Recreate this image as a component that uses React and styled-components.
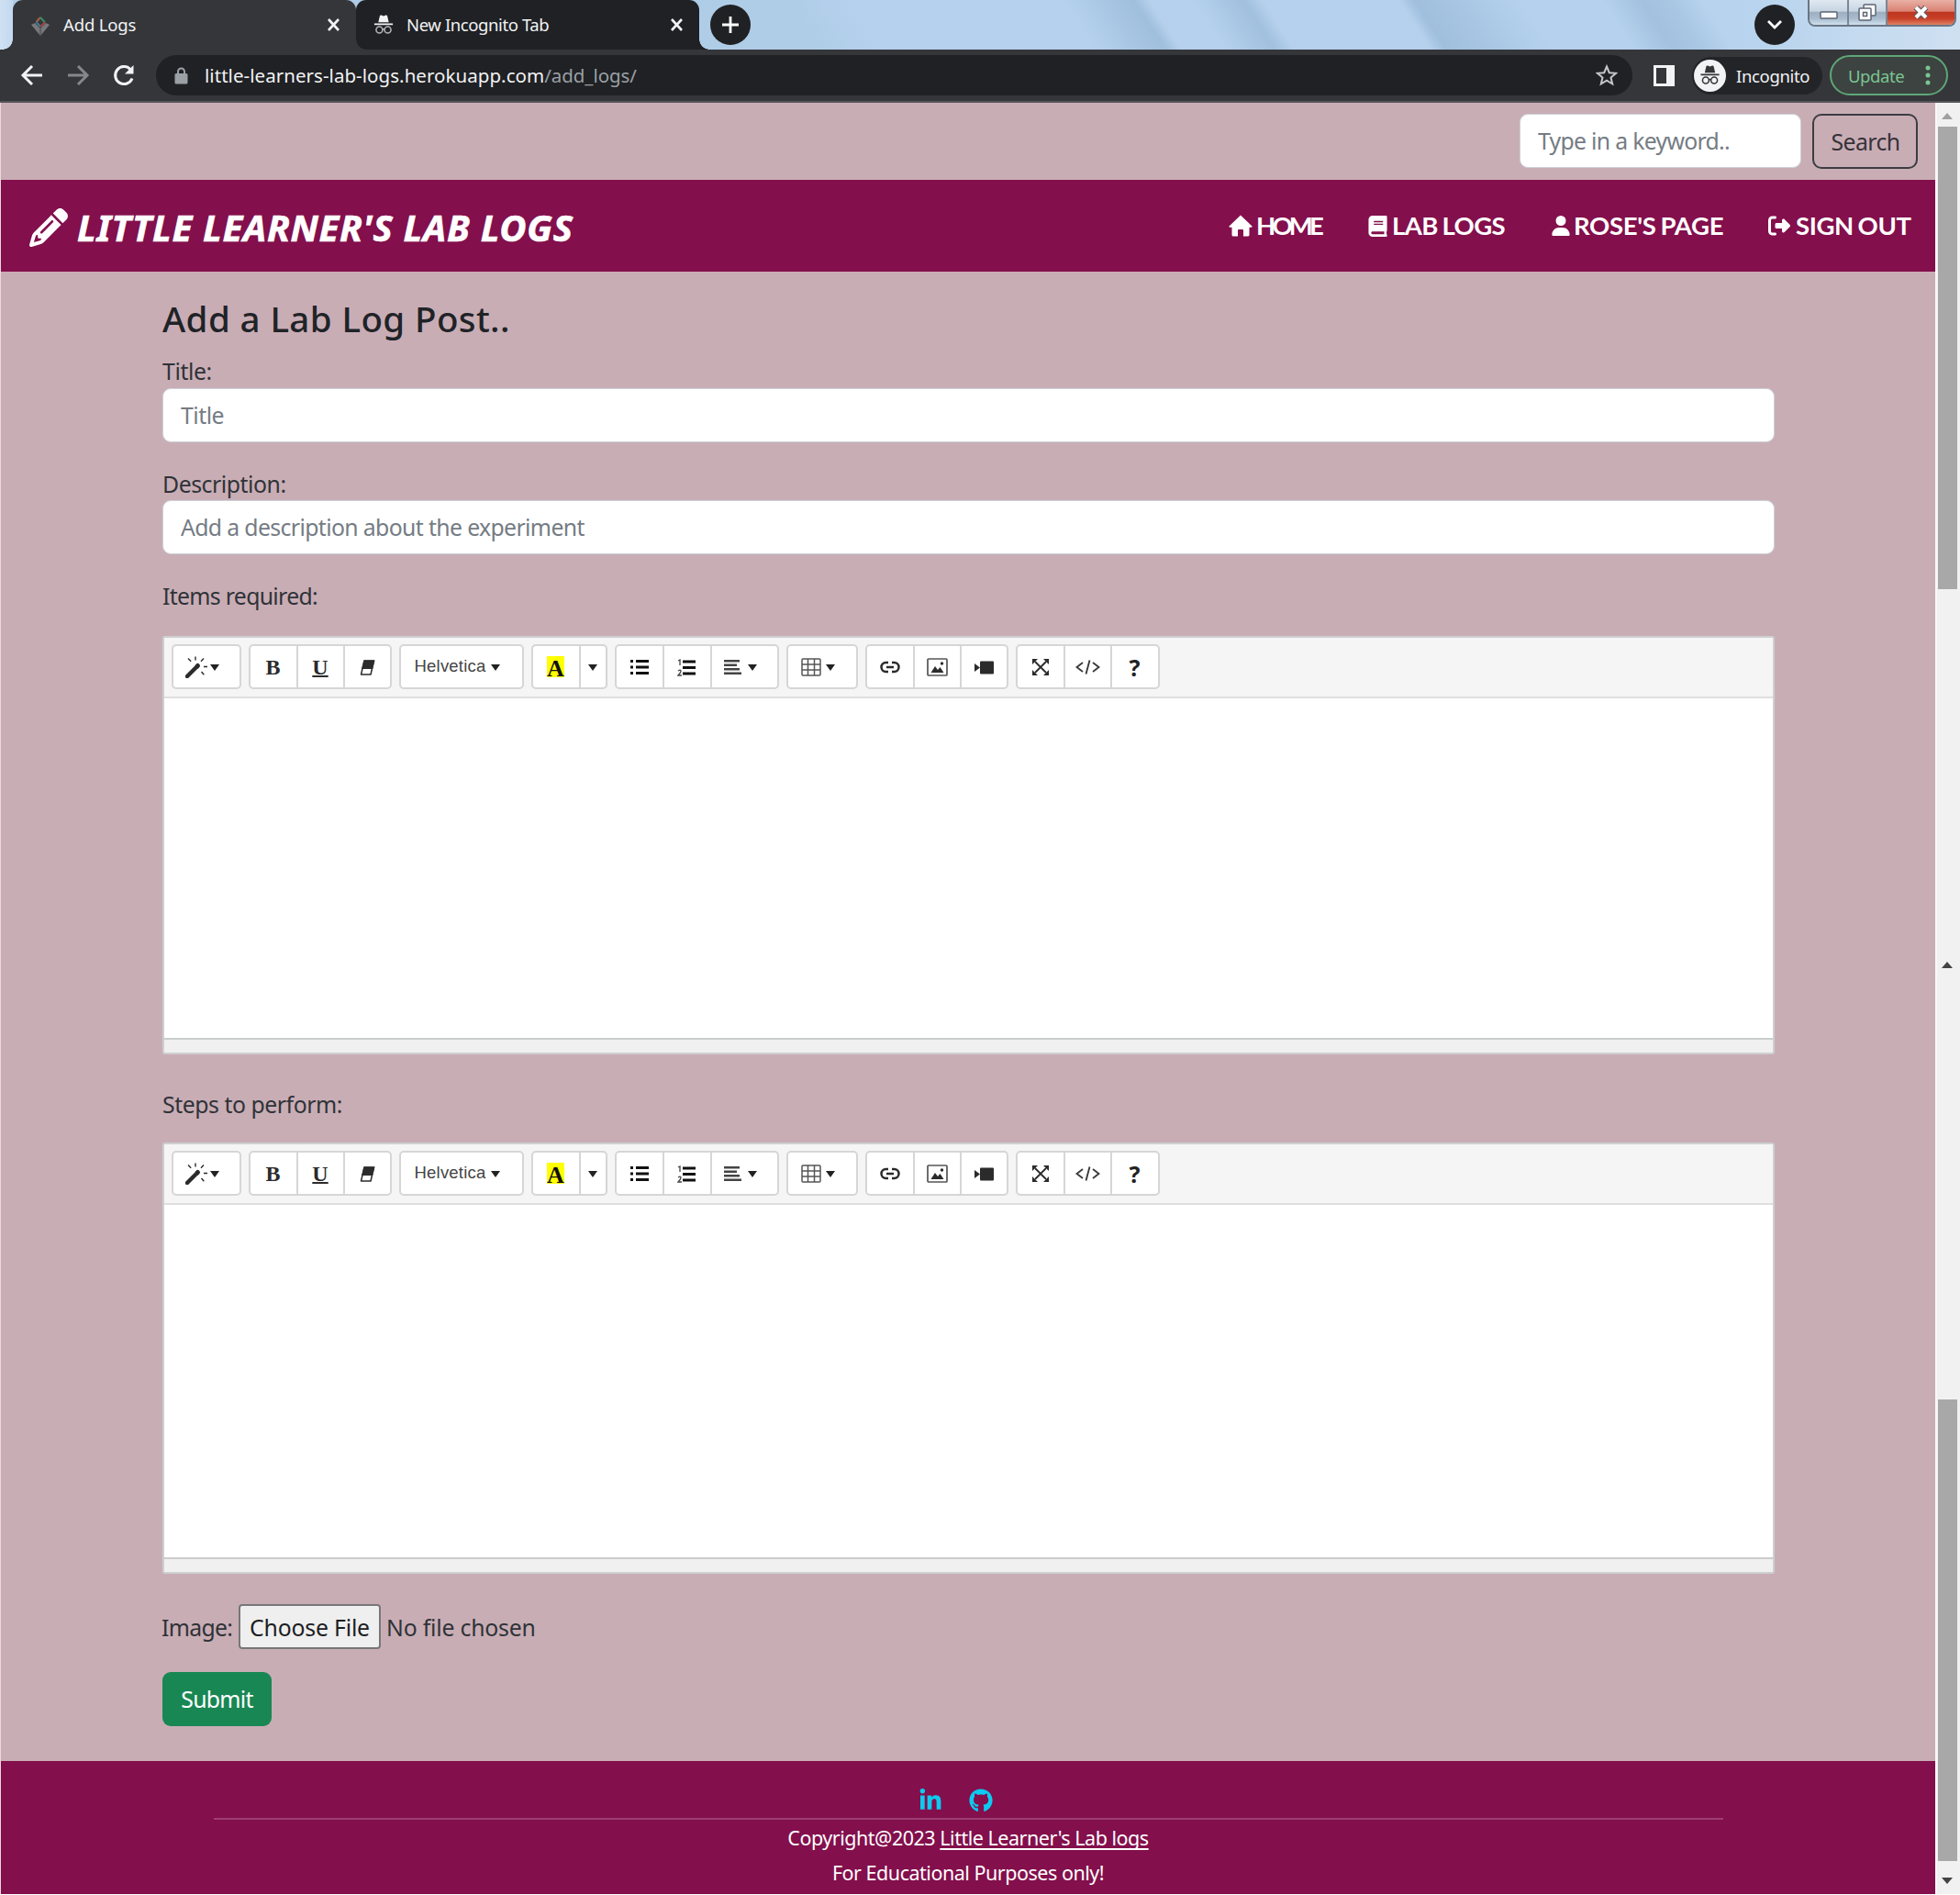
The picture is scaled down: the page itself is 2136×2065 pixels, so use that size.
import React from "react";
import styled, { createGlobalStyle } from "styled-components";
import { FaBook, FaLinkedinIn, FaGithub } from "react-icons/fa";
import { FaUser, FaRightFromBracket, FaPencil } from "react-icons/fa6";

const BURGUNDY = "#830f4c";
const ROSE = "#c9adb5";

const GlobalStyle = createGlobalStyle`
  * { box-sizing: border-box; }
  body { margin: 0; background: #fff; color: #2f3338; font-family: "Noto Sans", "Open Sans", sans-serif; overflow: hidden; }
  input, button { font-family: inherit; }
`;

const Window = styled.div`
  width: 2136px;
  height: 2065px;
  display: flex;
  flex-direction: column;
  overflow: hidden;
`;

/* ---------- browser chrome ---------- */
const TabStrip = styled.div`
  height: 54px;
  flex: none;
  display: flex;
  padding-left: 14px;
  background:
    linear-gradient(90deg, #cfe1f3 0, #c3d9ef 14px, transparent 14px),
    linear-gradient(57deg, rgba(150,185,205,.16) 0 41%, transparent 44% 55%, rgba(110,150,185,.3) 58.5%, transparent 59.300% 61.500%, rgba(110,150,185,.28) 64%, transparent 65% 71.800%, rgba(110,150,185,.3) 72.600%, transparent 78% 82%, rgba(110,150,185,.26) 84%, rgba(110,150,185,.18) 85.500%, transparent 87%),
    linear-gradient(90deg, #b4d0ec 0, #b5d1ed 84%, #b9d4ee 90%, #cfe0f1 100%);
`;
const Tab = styled.div`
  position: relative;
  z-index: ${(p) => (p.$active ? 1 : 0)};
  width: ${(p) => p.$width}px;
  height: 54px;
  padding: 0 16px 0 19px;
  display: flex;
  align-items: center;
  background: ${(p) => (p.$active ? "#35363a" : "#202124")};
  border-radius: 11px 11px 0 0;
  color: #f1f3f4;
  &::before, &::after {
    content: "";
    position: absolute;
    bottom: 0;
    width: 11px;
    height: 11px;
  }
  &::before { left: -11px; background: radial-gradient(circle at 0 0, transparent 10.5px, ${(p) => (p.$active ? "#35363a" : "#202124")} 11px); }
  &::after { right: -11px; background: radial-gradient(circle at 100% 0, transparent 10.5px, ${(p) => (p.$active ? "#35363a" : "#202124")} 11px); }
`;
const TabTitle = styled.span`
  flex: 1;
  margin-left: 14px;
  font-size: 18.5px;
  line-height: 54px;
  letter-spacing: ${(p) => p.$spacing}px;
  white-space: nowrap;
`;
const RoundButton = styled.div`
  width: 44px;
  height: 44px;
  margin: 5px 0 0 ${(p) => p.$left}px;
  border-radius: 50%;
  background: #202124;
  display: grid;
  place-items: center;
`;
const WindowButtons = styled.div`
  display: flex;
  height: 29px;
  width: 162px;
  margin: 0 4px 0 14px;
  border: 2px solid #6a7684;
  border-top: 0;
  border-radius: 0 0 8px 8px;
  overflow: hidden;
`;
const WindowButton = styled.div`
  width: ${(p) => p.$width}px;
  padding-top: ${(p) => p.$drop || 0}px;
  border-right: ${(p) => (p.$close ? 0 : 2)}px solid #7a8796;
  background: ${(p) => p.$close
    ? "linear-gradient(#e9b0a5 0, #d98273 45%, #bf3621 50%, #c83f26 75%, #e08265 100%)"
    : "linear-gradient(#dfe8f1 0, #c7d5e2 45%, #9dafc1 50%, #a9bccd 75%, #cfe0ee 100%)"};
  display: grid;
  place-items: center;
`;
const AddressBar = styled.div`
  height: 58px;
  flex: none;
  display: flex;
  align-items: center;
  background: #35363a;
  border-bottom: 2px solid #55565a;
  padding: 0 12px 0 22px;
`;
const NavIcons = styled.div`
  display: flex;
  gap: 24px;
  width: 148px;
`;
const Omnibox = styled.div`
  width: 1609px;
  height: 44px;
  border-radius: 22px;
  background: #202124;
  display: flex;
  align-items: center;
  padding: 0 16px 0 20px;
`;
const Url = styled.div`
  flex: 1;
  margin-left: 18px;
  font-size: 20.5px;
  line-height: 44px;
  letter-spacing: 0.05px;
  color: #f1f3f4;
  span { color: #9aa0a6; letter-spacing: -0.05px; }
`;
const PanelIcon = styled.div`
  width: 23px;
  height: 23px;
  margin: 0 19px 0 23px;
  border: 3px solid #f1f3f4;
  border-right-width: 9px;
`;
const Profile = styled.div`
  width: 142px;
  height: 41px;
  border-radius: 21px;
  background: #232428;
  padding-left: 2px;
  display: flex;
  align-items: center;
  gap: 11px;
  color: #f1f3f4;
  font-size: 18.5px;
  letter-spacing: -0.35px;
`;
const Update = styled.div`
  width: 129px;
  height: 44px;
  margin-left: 8px;
  border: 2px solid #5fa777;
  border-radius: 22px;
  background: #3c4340;
  color: #7bc592;
  font-size: 18.5px;
  display: flex;
  align-items: center;
  justify-content: space-between;
  padding: 0 17px 0 18px;
  letter-spacing: -0.4px;
`;

/* ---------- page ---------- */
const Viewport = styled.div`
  display: flex;
  height: 1952px;
`;
const Page = styled.div`
  width: 2109px;
  border-left: 1px solid #ead9de;
  background: ${ROSE};
  display: flex;
  flex-direction: column;
`;
const SearchRow = styled.div`
  height: 84px;
  padding: 12px 19px 0 0;
  display: flex;
  justify-content: flex-end;
  gap: 12px;
`;
const Field = styled.input`
  display: block;
  width: ${(p) => p.$width}px;
  height: 59px;
  border: 1.5px solid #ccd1d8;
  border-radius: 9px;
  background: #fff;
  padding: 0 19px 2px;
  outline: 0;
  font-size: 24.8px;
  letter-spacing: ${(p) => p.$spacing || 0}px;
  &::placeholder { color: #757c84; opacity: 1; }
`;
const SearchButton = styled.button`
  width: 115px;
  height: 60px;
  padding: 0 0 0 1px;
  border: 2px solid #3c3c42;
  border-radius: 10px;
  background: transparent;
  color: #363239;
  font-size: 24.8px;
  letter-spacing: -0.6px;
`;
const NavBar = styled.nav`
  height: 100px;
  background: ${BURGUNDY};
  color: #fff;
  display: flex;
  align-items: center;
  padding: 0 25px 0 31px;
`;
const Brand = styled.div`
  flex: 1;
  display: flex;
  align-items: center;
  gap: 10px;
  font-size: 40px;
  font-weight: 700;
  font-style: italic;
  letter-spacing: 0.75px;
  -webkit-text-stroke: 0.7px #fff;
  line-height: 54px;
  padding-top: 4px;
  white-space: nowrap;
`;
const Links = styled.div`
  display: flex;
  gap: 49px;
  font-family: Lato, sans-serif;
  font-weight: 700;
  font-size: 27.5px;
  line-height: 36px;
`;
const NavLink = styled.a`
  display: flex;
  align-items: center;
  width: ${(p) => p.$width}px;
  gap: ${(p) => p.$gap}px;
  letter-spacing: ${(p) => p.$spacing}px;
  word-spacing: -1.5px;
  white-space: nowrap;
  svg { flex: none; }
`;
const Form = styled.form`
  width: 1757px;
  margin-left: 176px;
  height: 1623px;
`;
const Heading = styled.h3`
  margin: 0;
  padding-top: 27px;
  height: 86px;
  font-size: 38.5px;
  font-weight: 500;
  line-height: 48px;
  color: #1f2327;
  letter-spacing: 0.4px;
`;
const Label = styled.label`
  display: block;
  height: ${(p) => p.$height}px;
  padding-top: ${(p) => p.$top}px;
  font-size: 24.8px;
  line-height: 37px;
  letter-spacing: ${(p) => p.$spacing}px;
`;
const Editor = styled.div`
  border: 2px solid #cdcfd0;
  border-radius: 3px;
  background: #fff;
  width: 1757px;
`;
const Toolbar = styled.div`
  height: 66px;
  background: #f5f5f5;
  border-bottom: 2px solid #dfdfdf;
  padding: 7px 0 0 8px;
  display: flex;
  gap: 8px;
`;
const Group = styled.div`
  display: flex;
  height: 49px;
  border: 2px solid #d6d6d6;
  border-radius: 5px;
  background: #fff;
`;
const Tool = styled.div`
  width: ${(p) => p.$width}px;
  display: flex;
  align-items: center;
  justify-content: center;
  gap: ${(p) => p.$gap || 0}px;
  padding: 1px ${(p) => (p.$gap ? 9 : 1)}px 0 0;
  color: #222;
  & + & { border-left: 2px solid #d6d6d6; }
`;
const Letter = styled.span`
  font-family: "Liberation Serif", serif;
  font-weight: 700;
  font-size: 24px;
  line-height: 26px;
  color: #2b2b2b;
  text-decoration: ${(p) => (p.$underline ? "underline" : "none")};
  text-decoration-thickness: 1.5px;
  text-underline-offset: 1px;
`;
const Marker = styled.span`
  width: 19px;
  height: 23px;
  margin-top: -1px;
  background: #ff0;
  color: #111;
  font-family: "Liberation Serif", serif;
  font-weight: 700;
  font-size: 26px;
  line-height: 27px;
  text-align: center;
`;
const FontName = styled.span`
  font-family: "Liberation Sans", Arial, sans-serif;
  font-size: 18.5px;
  letter-spacing: 0.2px;
  color: #444;
  margin-top: -3px;
`;
const Help = styled.span`
  font-weight: 700;
  font-size: 25px;
  line-height: 26px;
  color: #222;
`;
const Caret = styled.i`
  border: 5px solid transparent;
  border-top: 7px solid #222;
  border-bottom: 0;
`;
const Canvas = styled.div`
  height: ${(p) => p.$height}px;
`;
const Grip = styled.div`
  height: 16px;
  border-top: 2px solid #cbcdcd;
  background: #f0f0f0;
`;
const FileRow = styled.div`
  margin-top: 33px;
  height: 49px;
  display: flex;
  align-items: center;
  font-size: 24.8px;
  letter-spacing: -0.2px;
`;
const FileLabel = styled.span`
  width: 84px;
  margin-left: -1px;
  letter-spacing: -0.7px;
`;
const FileButton = styled.button`
  width: 155px;
  height: 49px;
  padding: 0;
  margin-right: 6px;
  border: 2px solid #77777a;
  border-radius: 4px;
  background: #efefef;
  color: #1d1d1f;
  font-size: 24.8px;
  letter-spacing: -0.2px;
  white-space: nowrap;
`;
const Submit = styled.button`
  display: block;
  width: 119px;
  height: 59px;
  margin-top: 25px;
  padding: 0 0 1px;
  border: 0;
  border-radius: 9px;
  background: #198754;
  color: #fff;
  font-size: 24.8px;
  letter-spacing: -0.7px;
`;
const Footer = styled.footer`
  height: 145px;
  background: ${BURGUNDY};
  color: #fff;
  text-align: center;
  font-size: 21.5px;
`;
const Social = styled.div`
  height: 62px;
  padding: 30px 28px 0 0;
  display: flex;
  justify-content: center;
  gap: 29px;
  color: #0dcaf0;
`;
const Rule = styled.div`
  width: 1645px;
  height: 2px;
  margin: 0 auto;
  background: #9d3f70;
`;
const FooterLine = styled.p`
  margin: 0;
  height: 37.5px;
  padding-top: 3px;
  line-height: 34px;
  letter-spacing: -0.48px;
  a { color: inherit; text-decoration: underline; text-decoration-thickness: 2px; text-underline-offset: 3px; text-decoration-skip-ink: none; }
`;

/* ---------- scrollbars ---------- */
const Rail = styled.div`
  width: 27px;
  background: #f1f1f1;
  border-left: 2px solid #f8f8f8;
  padding-right: 3px;
  display: flex;
  flex-direction: column;
  align-items: center;
`;
const Thumb = styled.div`
  width: 21px;
  height: ${(p) => p.$height}px;
  background: #a8a8a8;
`;
const Arrow = styled.i`
  margin: ${(p) => p.$margin};
  border: 6px solid transparent;
  ${(p) => p.$down ? "border-top: 7px solid #444; border-bottom: 0;" : `border-bottom: 7px solid ${p.$color}; border-top: 0;`}
`;

const Svg = ({ w, h = w, box, children, ...rest }) => (
  <svg width={w} height={h} viewBox={box || `0 0 ${w} ${h}`} fill="none" {...rest}>{children}</svg>
);
const Close = () => (
  <Svg w={16} stroke="#f1f3f4" strokeWidth="2.6"><path d="M2 2l11 12M13 2L2 14" /></Svg>
);
const House = () => (
  <Svg w={26} h={24} fill="#fff"><path d="M13 0.500L25.500 12.500q.4 1.300-1 1.300H22.500V22q0 1.500-1.500 1.500H16V17q0-1-1-1H11q-1 0-1 1v6.500H5Q3.500 23.500 3.500 22V13.800H1.500q-1.400 0-1-1.300z" /></Svg>
);
const Spy = ({ w, color, body = color }) => (
  <Svg w={w} box="0 0 24 24" fill={color}>
    <path d="M7.5 1.500c.3-.9 1-1.200 1.800-.9L12 1.500l2.700-.9c.8-.3 1.500 0 1.800.9L18.200 9H5.800zM1 10.300h22v2H1z" />
    <g fill="none" stroke={body} strokeWidth="1.700"><circle cx="7" cy="18" r="3.800" /><circle cx="17" cy="18" r="3.800" /><path d="M10.500 17.500q1.500-1.200 3 0" /></g>
  </Svg>
);

function EditorTools() {
  const k = "#2b2b2b";
  return (
    <Toolbar>
      <Group>
        <Tool $width={72} $gap={3}>
          <Svg w={24} stroke={k}>
            <path d="M2 22L10.500 13.500" strokeWidth="4.500" strokeLinecap="round" /><path d="M12.500 11.500l1-1" strokeWidth="5" strokeLinecap="round" />
            <path d="M11 0.500v4M3 2.500l3.200 3.200M20 2.500l-3 3.200M20 11.500h4M17.500 17l2.800 3.200" strokeWidth="1.400" />
          </Svg>
          <Caret />
        </Tool>
      </Group>
      <Group>
        <Tool $width={50}><Letter>B</Letter></Tool>
        <Tool $width={51}><Letter $underline>U</Letter></Tool>
        <Tool $width={51}>
          <Svg w={17} h={17}><path d="M5 1h10.500L12 16H1.500z" stroke={k} strokeWidth="1.500" strokeLinejoin="round" /><path d="M4.500 0.500H16.500l-2.400 9.500H2z" fill={k} /></Svg>
        </Tool>
      </Group>
      <Group><Tool $width={132} $gap={6}><FontName>Helvetica</FontName><Caret /></Tool></Group>
      <Group>
        <Tool $width={50}><Marker>A</Marker></Tool>
        <Tool $width={29}><Caret /></Tool>
      </Group>
      <Group>
        <Tool $width={50}><Svg w={20} h={18} fill="#111"><path d="M6 1h14v3H6zM6 7.500h14v3H6zM6 14h14v3H6zM0 1h3v3H0zM0 7.500h3v3H0zM0 14h3v3H0z" /></Svg></Tool>
        <Tool $width={52}><Svg w={21} h={19}><path d="M6 1.500h14v3H6zM6 8h14v3H6zM6 14.500h14v3H6z" fill="#111" /><path d="M1 2l2-1v6M1 13q3-2 3 .5Q3.500 15.500 1 18h4" stroke="#444" strokeWidth="1.300" /></Svg></Tool>
        <Tool $width={73} $gap={7}><Svg w={19} h={18} fill="#444"><path d="M0 1h17v2.500H0zM0 5.500h14V8H0zM0 10h17v2.500H0zM0 14.500h19V17H0z" /></Svg><Caret /></Tool>
      </Group>
      <Group>
        <Tool $width={74} $gap={5}><Svg w={22} h={20} stroke="#555" strokeWidth="1.500"><rect x="1" y="1" width="20" height="18" rx="1" /><path d="M1 7h20M1 13h20M7.500 1v18M14.500 1v18" /></Svg><Caret /></Tool>
      </Group>
      <Group>
        <Tool $width={50}><Svg w={22} h={14} stroke={k} strokeWidth="2.500"><path d="M9 2H6.500a5 5 0 0 0 0 10H9M13 2h2.500a5 5 0 0 1 0 10H13M7 7h8" /></Svg></Tool>
        <Tool $width={51}><Svg w={23} h={20}><rect x="1" y="1" width="21" height="18" rx="1" stroke="#555" strokeWidth="1.700" /><path d="M4.500 16l4.500-7 3 4 2.500-3 4 6z" fill={k} /><circle cx="16.500" cy="6" r="1.700" fill={k} /></Svg></Tool>
        <Tool $width={51}><Svg w={21} h={15} fill={k}><rect x="6" y="0.500" width="15" height="14" rx="1" /><path d="M0 3L6 7.500 0 12z" /></Svg></Tool>
      </Group>
      <Group>
        <Tool $width={50}><Svg w={18}><path d="M3 3l12 12M15 3L3 15" stroke={k} strokeWidth="1.800" /><path d="M0 0h6L0 6zM18 0v6l-6-6zM0 18v-6l6 6zM18 18h-6l6-6z" fill={k} /></Svg></Tool>
        <Tool $width={51}><Svg w={27} h={16} stroke="#3b3b3b" strokeWidth="1.900"><path d="M8 3L1.500 8 8 13M19 3l6.500 5-6.500 5M15.500 0.500l-4 15" /></Svg></Tool>
        <Tool $width={52}><Help>?</Help></Tool>
      </Group>
    </Toolbar>
  );
}

const RichEditor = ({ height }) => (
  <Editor><EditorTools /><Canvas $height={height} /><Grip /></Editor>
);

export default function App() {
  return (
    <Window>
      <GlobalStyle />
      <TabStrip>
        <Tab $active $width={374}>
          <Svg w={22} h={24}>
            <path d="M1 12l10 12 10-12-4-2-6 6-6-6z" fill="#77787b" />
            <path d="M11 15v8" stroke="#55565a" strokeWidth="1.500" />
            <path d="M6.500 9L11 4" stroke="#a8604c" strokeWidth="2" /><path d="M11 4l5 5.500" stroke="#3c8d62" strokeWidth="2" />
            <path d="M6.500 9l4.500 5" stroke="#3d7d95" strokeWidth="2" /><path d="M11 14l5-4.500" stroke="#a84444" strokeWidth="2" />
          </Svg>
          <TabTitle $spacing={-0.15}>Add Logs</TabTitle><Close />
        </Tab>
        <Tab $width={374}>
          <Spy w={22} color="#f1f3f4" body="#b0b3b7" />
          <TabTitle $spacing={-0.4}>New Incognito Tab</TabTitle><Close />
        </Tab>
        <RoundButton $left={12}><Svg w={20} stroke="#fff" strokeWidth="2.800"><path d="M10 1v18M1 10h18" /></Svg></RoundButton>
        <RoundButton $left={1094}><Svg w={18} h={12} stroke="#fff" strokeWidth="2.800"><path d="M2 2l7 7 7-7" /></Svg></RoundButton>
        <WindowButtons>
          <WindowButton $width={43} $drop={5}><Svg w={20} h={9}><rect x="1" y="1" width="18" height="7" rx="1" fill="#fff" stroke="#5c6674" strokeWidth="1.500" /></Svg></WindowButton>
          <WindowButton $width={42}><Svg w={20} h={19} fill="#fff" stroke="#5c6674" strokeWidth="1.500"><rect x="6" y="1" width="13" height="12" rx="1" /><rect x="1" y="5" width="13" height="13" rx="1" /><rect x="5.500" y="9.500" width="4" height="4" /></Svg></WindowButton>
          <WindowButton $close $width={73}><Svg w={19} h={17}><path d="M4 3l11 11M15 3L4 14" stroke="#5f5660" strokeWidth="6.500" /><path d="M4 3l11 11M15 3L4 14" stroke="#fff" strokeWidth="4" /></Svg></WindowButton>
        </WindowButtons>
      </TabStrip>

      <AddressBar>
        <NavIcons>
          <Svg w={26} stroke="#f1f3f4" strokeWidth="3"><path d="M24 13H4M13 3L3 13l10 10" /></Svg>
          <Svg w={26} stroke="#85878b" strokeWidth="3"><path d="M2 13h20M13 3l10 10-10 10" /></Svg>
          <Svg w={26} stroke="#f1f3f4" strokeWidth="3"><path d="M22 16.500A9.500 9.500 0 1 1 20 6.500" /><path d="M23.500 2v9.500H14z" fill="#f1f3f4" stroke="none" /></Svg>
        </NavIcons>
        <Omnibox>
          <Svg w={15} h={19}><rect x="0.500" y="7" width="14" height="11.500" rx="1.500" fill="#9aa0a6" /><path d="M4 8V5a3.500 3.500 0 0 1 7 0v3" stroke="#9aa0a6" strokeWidth="2" /></Svg>
          <Url>little-learners-lab-logs.herokuapp.com<span>/add_logs/</span></Url>
          <Svg w={24} stroke="#c4c7ca" strokeWidth="2"><path d="M12 2.500l2.800 6.700 7.200.6-5.500 4.700 1.700 7L12 17.700 5.800 21.500l1.700-7L2 9.800l7.200-.6z" /></Svg>
        </Omnibox>
        <PanelIcon />
        <Profile>
          <Svg w={35}><circle cx="17.500" cy="17.500" r="17.500" fill="#f1f3f4" /><g transform="translate(6.500 6)"><Spy w={22} color="#35363a" /></g></Svg>
          Incognito
        </Profile>
        <Update>Update<Svg w={6} h={22} fill="#7bc592"><circle cx="3" cy="3" r="2.500" /><circle cx="3" cy="11" r="2.500" /><circle cx="3" cy="19" r="2.500" /></Svg></Update>
      </AddressBar>

      <Viewport>
        <Page>
          <SearchRow>
            <Field $width={307} $spacing={-0.7} placeholder="Type in a keyword.." />
            <SearchButton>Search</SearchButton>
          </SearchRow>
          <NavBar>
            <Brand><FaPencil size={42} />LITTLE LEARNER'S LAB LOGS</Brand>
            <Links>
              <NavLink $width={102} $gap={4} $spacing={-3.8}><House />HOME</NavLink>
              <NavLink $width={151} $gap={4} $spacing={-0.55}><FaBook size={23} />LAB LOGS</NavLink>
              <NavLink $width={188} $gap={3} $spacing={-0.3}><FaUser size={22} />ROSE'S PAGE</NavLink>
              <NavLink $width={157} $gap={6} $spacing={-0.4}><FaRightFromBracket size={24} />SIGN OUT</NavLink>
            </Links>
          </NavBar>
          <Form>
            <Heading>Add a Lab Log Post..</Heading>
            <Label $height={41} $top={4} $spacing={-0.4}>Title:</Label>
            <Field $width={1757} $spacing={-0.5} placeholder="Title" />
            <Label $height={63} $top={27} $spacing={-0.45}>Description:</Label>
            <Field $width={1757} $spacing={-0.63} placeholder="Add a description about the experiment" />
            <Label $height={89} $top={27} $spacing={-0.68}>Items required:</Label>
            <RichEditor height={370} />
            <Label $height={96} $top={36} $spacing={-0.45}>Steps to perform:</Label>
            <RichEditor height={384} />
            <FileRow>
              <FileLabel>Image:</FileLabel>
              <FileButton type="button">Choose File</FileButton>
              <span>No file chosen</span>
            </FileRow>
            <Submit type="button">Submit</Submit>
          </Form>
          <Footer>
            <Social><FaLinkedinIn size={26} /><FaGithub size={26} /></Social>
            <Rule />
            <FooterLine>Copyright@2023 <a>Little Learner's Lab logs</a></FooterLine>
            <FooterLine>For Educational Purposes only!</FooterLine>
          </Footer>
        </Page>
        <Rail>
          <Arrow $margin="11px 0 8px" $color="#a0a0a0" />
          <Thumb $height={504} />
          <Arrow $margin="406px 0 470px" $color="#444" />
          <Thumb $height={503} />
          <Arrow $down $margin="18px 0 0" />
        </Rail>
      </Viewport>
    </Window>
  );
}
